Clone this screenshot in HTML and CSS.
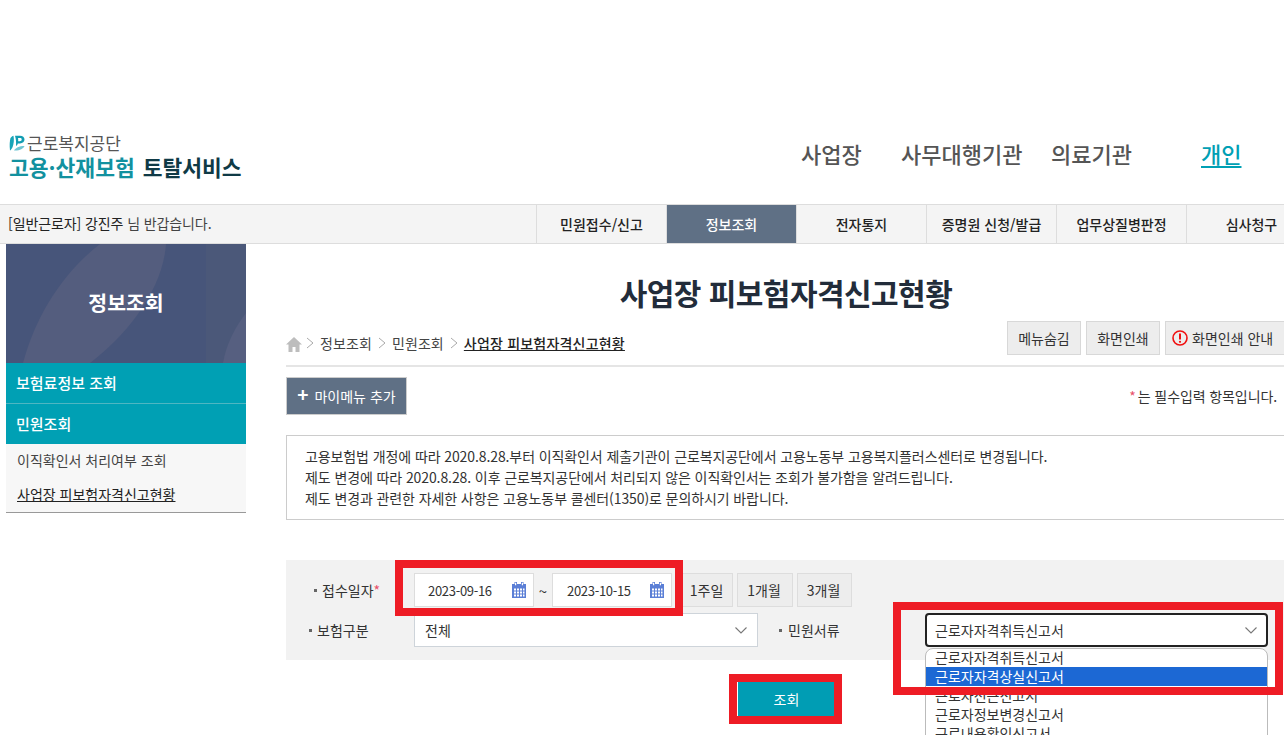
FILE: index.html
```html
<!DOCTYPE html>
<html lang="ko">
<head>
<meta charset="utf-8">
<title>사업장 피보험자격신고현황</title>
<link rel="stylesheet" href="styles.css">
</head>
<body>
<div class="page">
  <header class="top">
    <div class="logo">
      <div class="logo-org">
        <svg class="logo-mark" width="16" height="16" viewBox="0 0 16 16"><path d="M1 15.500C.4 11 .6 6 1.500 3 3 1.500 3.500 1 4.500.800c.8 4.200.2 8-.8 11C3 13.500 2 15 1 15.500z" fill="#18a5b8"/><path d="M6 .800h5c2.800 0 4.500 1.500 4.500 3.800 0 2.300-1.800 3.800-4.500 4H8.800C8.600 9.800 8 10.500 7 11 7.300 7.500 7 4 6 .800zM9 3c.2 1 .3 2 .2 3.200h1.500c1.300 0 2-.6 2-1.700S12 3 10.700 3z" fill="#129db2" fill-rule="evenodd"/><path d="M5 15.500c1.500-2.700 5-4.500 10.500-4.500-1 2.800-5.500 5-10.500 4.500z" fill="#6fc6d3"/></svg>
        <span>근로복지공단</span>
      </div>
      <div class="logo-title"><span class="logo-teal">고용·산재보험</span> <span class="logo-dark">토탈서비스</span></div>
    </div>
    <nav class="gnb">
      <a class="gnb-a">사업장</a>
      <a class="gnb-b">사무대행기관</a>
      <a class="gnb-c">의료기관</a>
      <a class="gnb-d">개인</a>
    </nav>
  </header>

  <div class="bar">
    <div class="welcome"><span class="welcome-name">[일반근로자] 강진주</span> 님 반갑습니다.</div>
    <ul class="tabs">
      <li class="tab">민원접수/신고</li>
      <li class="tab tab-on">정보조회</li>
      <li class="tab">전자통지</li>
      <li class="tab">증명원 신청/발급</li>
      <li class="tab">업무상질병판정</li>
      <li class="tab">심사청구</li>
    </ul>
  </div>

  <div class="body">
    <aside class="side">
      <div class="side-banner">
        <svg class="side-art" width="240" height="119" viewBox="0 0 240 119"><path d="M200 0h40v119h-40z" fill="#4b5879"/><path d="M17 119C30 70 58 28 94 0h66c-3 45-38 90-76 119z" fill="#545d7e"/><path d="M217 119c3-18 12-36 23-50v50z" fill="#565f80"/></svg>
        <span class="side-title">정보조회</span>
      </div>
      <div class="side-h side-h-line">보험료정보 조회</div>
      <div class="side-h">민원조회</div>
      <ul class="side-list">
        <li>이직확인서 처리여부 조회</li>
        <li class="side-cur">사업장 피보험자격신고현황</li>
      </ul>
    </aside>

    <main class="main">
      <h1 class="title">사업장 피보험자격신고현황</h1>
      <div class="crumb-row">
        <div class="crumbs">
          <svg class="home" width="16" height="16" viewBox="0 0 16 16"><path d="M8 1 0 8.500h2.500V16h4v-5h3v5h4V8.500H16z" fill="#bdbdbd"/></svg>
          <svg class="chev chev-first" width="8" height="12" viewBox="0 0 8 12"><path d="M1 1l6 5-6 5" fill="none" stroke="#aaa"/></svg>
          <span>정보조회</span>
          <svg class="chev" width="8" height="12" viewBox="0 0 8 12"><path d="M1 1l6 5-6 5" fill="none" stroke="#aaa"/></svg>
          <span>민원조회</span>
          <svg class="chev" width="8" height="12" viewBox="0 0 8 12"><path d="M1 1l6 5-6 5" fill="none" stroke="#aaa"/></svg>
          <span class="crumb-cur">사업장 피보험자격신고현황</span>
        </div>
        <div class="tools">
          <button class="tool tool-s">메뉴숨김</button>
          <button class="tool tool-s">화면인쇄</button>
          <button class="tool tool-l">
            <svg width="16" height="16" viewBox="0 0 16 16"><circle cx="8" cy="8" r="7" fill="none" stroke="#f01010" stroke-width="1.600"/><path d="M8 3.500v6" stroke="#f01010" stroke-width="2"/><circle cx="8" cy="11.800" r="1.100" fill="#f01010"/></svg>
            화면인쇄 안내
          </button>
        </div>
      </div>
      <div class="my-row">
        <button class="my-btn"><b class="plus">+</b> 마이메뉴 추가</button>
        <p class="req"><span class="star">*</span>는 필수입력 항목입니다.</p>
      </div>
      <div class="notice">
        <p>고용보험법 개정에 따라 2020.8.28.부터 이직확인서 제출기관이 근로복지공단에서 고용노동부 고용복지플러스센터로 변경됩니다.</p>
        <p>제도 변경에 따라 2020.8.28. 이후 근로복지공단에서 처리되지 않은 이직확인서는 조회가 불가함을 알려드립니다.</p>
        <p>제도 변경과 관련한 자세한 사항은 고용노동부 콜센터(1350)로 문의하시기 바랍니다.</p>
      </div>
      <form class="search">
        <div class="row">
          <span class="lab lab-date"><i class="dot"></i>접수일자<span class="star">*</span></span>
          <div class="date">2023-09-16
            <svg width="16" height="16" viewBox="0 0 16 16"><path d="M1 2h2.500V0h2.500v2h4V0h2.500v2H15v14H1z" fill="#5b7fd6"/><path d="M4 .800h1.200v2.500H4zM10.800.800H12v2.500h-1.200z" fill="#fff"/><path d="M3 6.500h2v2H3zM6 6.500h2v2H6zM9 6.500h2v2H9zM12 6.500h1.500v2H12zM3 9.500h2v2H3zM6 9.500h2v2H6zM9 9.500h2v2H9zM12 9.500h1.500v2H12zM3 12.500h2v2H3zM6 12.500h2v2H6zM9 12.500h2v2H9zM12 12.500h1.500v2H12z" fill="#fff"/></svg>
          </div>
          <span class="tilde">~</span>
          <div class="date date-end">2023-10-15
            <svg width="16" height="16" viewBox="0 0 16 16"><path d="M1 2h2.500V0h2.500v2h4V0h2.500v2H15v14H1z" fill="#5b7fd6"/><path d="M4 .800h1.200v2.500H4zM10.800.800H12v2.500h-1.200z" fill="#fff"/><path d="M3 6.500h2v2H3zM6 6.500h2v2H6zM9 6.500h2v2H9zM12 6.500h1.500v2H12zM3 9.500h2v2H3zM6 9.500h2v2H6zM9 9.500h2v2H9zM12 9.500h1.500v2H12zM3 12.500h2v2H3zM6 12.500h2v2H6zM9 12.500h2v2H9zM12 12.500h1.500v2H12z" fill="#fff"/></svg>
          </div>
          <button class="range range-a" type="button">1주일</button>
          <button class="range range-b" type="button">1개월</button>
          <button class="range range-c" type="button">3개월</button>
        </div>
        <div class="row">
          <span class="lab lab-ins"><i class="dot"></i>보험구분</span>
          <div class="sel sel-ins">전체
            <svg width="12" height="7" viewBox="0 0 12 7"><path d="M.5.500 6 6 11.500.500" fill="none" stroke="#777" stroke-width="1.100"/></svg>
          </div>
          <span class="lab lab-kind"><i class="dot"></i>민원서류</span>
          <div class="sel sel-kind">근로자자격취득신고서
            <svg width="12" height="7" viewBox="0 0 12 7"><path d="M.5.500 6 6 11.500.500" fill="none" stroke="#777" stroke-width="1.100"/></svg>
          </div>
        </div>
      </form>
      <div class="actions"><button class="go" type="button">조회</button></div>
    </main>
  </div>

  <ul class="drop">
    <li>근로자자격취득신고서</li>
    <li class="drop-on">근로자자격상실신고서</li>
    <li>근로자전근신고서</li>
    <li>근로자정보변경신고서</li>
    <li>근로내용확인신고서</li>
  </ul>
  <div class="mark mark-date"></div>
  <div class="mark mark-kind"></div>
  <div class="mark mark-go"></div>
</div>
</body>
</html>
```
FILE: styles.css
```css
* { box-sizing: border-box; }
html, body { margin: 0; padding: 0; background: #fff; }
body {
  font-family: "Noto Sans CJK KR", "Noto Sans", sans-serif;
  font-size: 14px;
  color: #333;
  overflow: hidden;
}
ul { list-style: none; margin: 0; padding: 0; }
p { margin: 0; }
button { font: inherit; color: inherit; cursor: pointer; }
.page { position: relative; width: 1284px; height: 735px; overflow: hidden; }

.top { height: 204px; display: flex; justify-content: space-between; padding: 133px 0 0 9px; }
.logo-org { display: flex; align-items: center; gap: 2px; height: 20px; font-size: 17px; line-height: 20px; color: #555; }
.logo-mark { flex: none; }
.logo-title { margin-top: 2px; font-size: 21.5px; line-height: 24px; font-weight: 700; white-space: nowrap; }
.logo-teal { color: #12919f; }
.logo-dark { color: #0f3a46; margin-left: 2px; }
.gnb { display: flex; height: 44px; font-size: 22px; line-height: 40px; font-weight: 500; color: #555; }
.gnb a { display: block; white-space: nowrap; }
.gnb-a { width: 100px; }
.gnb-b { width: 150px; }
.gnb-c { width: 150px; }
.gnb-d { width: 83px; color: #00a0b4; text-decoration: underline; text-underline-offset: 3px; }

.bar { height: 40px; display: flex; justify-content: space-between; background: #f4f4f4; border-top: 1px solid #ddd; border-bottom: 1px solid #ddd; }
.welcome { padding-left: 8px; line-height: 37px; font-size: 14px; letter-spacing: -0.1px; color: #444; white-space: nowrap; }
.welcome-name { color: #222; }
.tabs { display: flex; width: 748px; flex: none; }
.tab { width: 130px; flex: none; border-left: 1px solid #ddd; text-align: center; line-height: 38px; font-size: 14px; font-weight: 500; color: #222; white-space: nowrap; }
.tab-on { background: #5f7085; color: #fff; background-clip: padding-box; }

.body { display: flex; align-items: flex-start; padding-left: 6px; }
.side { width: 240px; flex: none; }
.side-banner { position: relative; height: 119px; background: #47557a; display: flex; align-items: center; justify-content: center; overflow: hidden; padding-bottom: 4px; }
.side-art { position: absolute; left: 0; top: 0; }
.side-title { position: relative; font-size: 20.5px; font-weight: 700; color: #fff; }
.side-h { height: 41px; padding-left: 10px; background: #00a0b4; color: #fff; font-size: 15px; font-weight: 500; line-height: 39px; }
.side-h-line { border-bottom: 1px solid #4fb6c2; }
.side-h:last-of-type { height: 40px; }
.side-list { background: #f7f7f7; border-bottom: 1px solid #999; padding: 5px 0 0 11px; font-size: 14px; height: 69px; color: #444; }
.side-list li { height: 34px; line-height: 20px; padding-top: 1px; white-space: nowrap; }
.side-cur { text-decoration: underline; color: #222; }

.main { width: 1000px; flex: none; margin-left: 40px; }
.title { margin: 26px 0 0; height: 44px; text-align: center; font-size: 30px; line-height: 44px; font-weight: 700; letter-spacing: -0.55px; color: #222c3a; }
.crumb-row { display: flex; justify-content: space-between; height: 46px; margin-top: 7px; border-bottom: 2px solid #e5e5e5; }
.crumbs { display: flex; align-items: center; gap: 4px; height: 24px; margin-top: 10px; font-size: 14px; letter-spacing: 0.1px; white-space: nowrap; color: #444; }
.crumb-cur { font-weight: 500; letter-spacing: 0.2px; text-decoration: underline; color: #222; }
.home { margin-top: 2px; }
.chev { margin: 0 2px; }
.chev-first { margin-left: 0; }
.tools { display: flex; gap: 5px; flex: none; margin-right: -1px; height: 34px; }
.tool { height: 34px; padding: 0; background: #ededed; border: 1px solid #d8d8d8; font-size: 14px; white-space: nowrap; color: #333; }
.tool-s { width: 74px; }
.tool-l { width: 122px; display: flex; align-items: center; gap: 4px; padding-left: 6px; }
.my-row { display: flex; justify-content: space-between; align-items: center; margin-top: 10px; height: 38px; }
.my-btn { width: 121px; height: 38px; padding: 0; background: #5f7085; border: 1px solid #ccc; color: #fff; font-size: 14px; white-space: nowrap; }
.plus { font-size: 19px; line-height: 14px; margin-right: 2px; }
.req { padding-right: 9px; white-space: nowrap; font-size: 14px; letter-spacing: -0.1px; color: #333; }
.star { color: #e8506a; }
.req .star { margin-right: 2px; }
.notice { margin-top: 20px; height: 85px; padding: 10px 18px; border: 1px solid #ccc; font-size: 14px; line-height: 21px; letter-spacing: -0.1px; color: #333; white-space: nowrap; width: 1010px; }

.search { margin-top: 40px; height: 100px; background: #f2f2f2; padding-top: 13px; display: flex; flex-direction: column; gap: 6px; }
.row { display: flex; align-items: center; height: 34px; white-space: nowrap; }
.lab { display: flex; align-items: center; font-size: 14px; flex: none; }
.dot { width: 3px; height: 3px; background: #666; margin-right: 5px; flex: none; }
.lab-date { width: 128px; padding-left: 28px; }
.lab-ins { width: 128px; padding-left: 23px; }
.lab-kind { width: 146px; margin-left: 21px; }
.lab-kind .dot { margin-right: 6px; }
.date { width: 120px; height: 34px; background: #fff; border: 1px solid #ddd; display: flex; align-items: center; justify-content: space-between; padding: 0 6px 0 13px; font-size: 13px; letter-spacing: -0.3px; }
.date-end { padding-left: 14px; }
.tilde { width: 18px; text-align: center; font-size: 15px; }
.range { height: 34px; padding: 0 2px 0 0; margin-left: 4px; background: #ededed; border: 1px solid #ddd; font-size: 14px; }
.range-a { width: 51px; margin-left: 10px; }
.range-b { width: 56px; }
.range-c { width: 55px; }
.sel { height: 34px; background: #fff; border: 1px solid #ced4da; display: flex; align-items: center; justify-content: space-between; padding: 0 10px; }
.sel-ins { width: 344px; }
.sel-kind { width: 343px; border: 2px solid #222; border-radius: 4px; padding: 0 9px 0 8px; }
.actions { display: flex; justify-content: center; margin-top: 22px; padding-left: 1px; }
.go { width: 97px; height: 34px; padding: 0; background: #009db4; border: 0; color: #fff; font-size: 14px; }

.drop { position: absolute; left: 925px; top: 648px; width: 343px; height: 100px; background: #fff; border: 1px solid #bbb; border-radius: 8px 8px 0 0; overflow: hidden; font-size: 14px; line-height: 18px; color: #333; }
.drop li { height: 19px; padding-left: 9px; white-space: nowrap; }
.drop li:first-child { height: 18px; line-height: 16px; }
.drop-on { background: #1c68d4; color: #fff; }

.mark { position: absolute; border: 8px solid #ee1c25; }
.mark-date { left: 395px; top: 560px; width: 288px; height: 56px; }
.mark-kind { left: 893px; top: 602px; width: 390px; height: 93px; }
.mark-go { left: 729px; top: 674px; width: 113px; height: 50px; }
```
